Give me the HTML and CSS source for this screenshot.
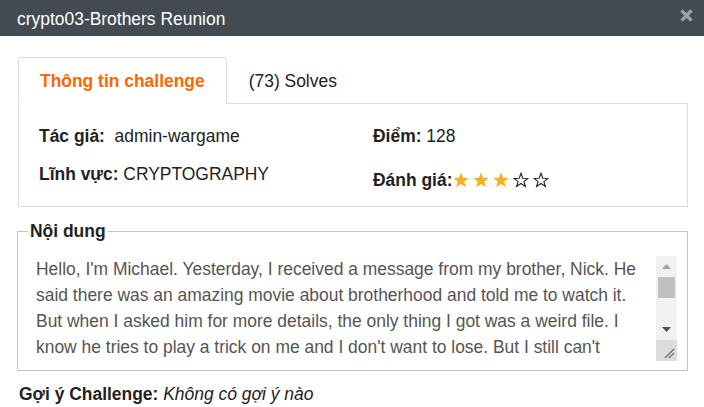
FILE: index.html
```html
<!DOCTYPE html>
<html lang="vi">
<head>
<meta charset="utf-8">
<title>crypto03-Brothers Reunion</title>
<link rel="stylesheet" href="styles.css">
</head>
<body>
<div class="modal">
  <div class="modal-header">
    <h4 class="title">crypto03-Brothers Reunion</h4>
    <span class="close">
      <svg width="13" height="13" viewBox="0 0 13 13"><path d="M1.5 1.5 L11.5 11.5 M11.5 1.5 L1.5 11.5" stroke="#9da1a6" stroke-width="3.2" stroke-linecap="butt"/></svg>
    </span>
  </div>
  <div class="modal-body">
    <ul class="tabs">
      <li class="tab active">Thông tin challenge</li>
      <li class="tab">(73) Solves</li>
    </ul>
    <div class="panel">
      <div class="col">
        <p class="row"><b>Tác giả:</b>&nbsp; admin-wargame</p>
        <p class="row"><b>Lĩnh vực:</b> CRYPTOGRAPHY</p>
      </div>
      <div class="col">
        <p class="row"><b>Điểm:</b> 128</p>
        <p class="row rating"><b>Đánh giá:</b><span class="stars">
          <svg class="star full" viewBox="0 0 16 16"><polygon points="8,0.4 10.1,5.8 15.8,6 11.3,9.6 12.9,15.3 8,12 3.1,15.3 4.7,9.6 0.2,6 5.9,5.8"/></svg>
          <svg class="star full" viewBox="0 0 16 16"><polygon points="8,0.4 10.1,5.8 15.8,6 11.3,9.6 12.9,15.3 8,12 3.1,15.3 4.7,9.6 0.2,6 5.9,5.8"/></svg>
          <svg class="star full" viewBox="0 0 16 16"><polygon points="8,0.4 10.1,5.8 15.8,6 11.3,9.6 12.9,15.3 8,12 3.1,15.3 4.7,9.6 0.2,6 5.9,5.8"/></svg>
          <svg class="star empty" viewBox="0 0 16 16"><polygon points="8,1.2 9.8,6.2 15,6.4 10.9,9.6 12.4,14.5 8,11.5 3.6,14.5 5.1,9.6 1,6.4 6.2,6.2"/></svg>
          <svg class="star empty" viewBox="0 0 16 16"><polygon points="8,1.2 9.8,6.2 15,6.4 10.9,9.6 12.4,14.5 8,11.5 3.6,14.5 5.1,9.6 1,6.4 6.2,6.2"/></svg>
        </span></p>
      </div>
    </div>
    <fieldset class="content">
      <legend>Nội dung</legend>
      <div class="desc">
        <div class="desc-text">Hello, I'm Michael. Yesterday, I received a message from my brother, Nick. He<br>said there was an amazing movie about brotherhood and told me to watch it.<br>But when I asked him for more details, the only thing I got was a weird file. I<br>know he tries to play a trick on me and I don't want to lose. But I still can't</div>
        <div class="scrollbar">
          <div class="sb-btn"><svg width="9" height="5" viewBox="0 0 9 5"><polygon points="0,5 4.5,0 9,5" fill="#a3a3a3"/></svg></div>
          <div class="sb-thumb"></div>
          <div class="sb-track"></div>
          <div class="sb-btn"><svg width="9" height="5" viewBox="0 0 9 5"><polygon points="0,0 4.5,5 9,0" fill="#505050"/></svg></div>
          <div class="sb-corner"><svg width="21" height="21" viewBox="0 0 21 21"><path d="M9 18 L18 9 M13 18 L18 13" stroke="#6e6e6e" stroke-width="1.3"/></svg></div>
        </div>
      </div>
    </fieldset>
    <p class="hint"><b>Gợi ý Challenge:</b> <i>Không có gợi ý nào</i></p>
  </div>
</div>
</body>
</html>
```

FILE: styles.css
```css
* { box-sizing: border-box; }

body {
  margin: 0;
  font-family: "Liberation Sans", Arial, sans-serif;
  font-size: 17.45px;
  color: #222;
  background: #fff;
}

.modal-header {
  height: 36px;
  background: #434a52;
  display: flex;
  align-items: center;
  justify-content: space-between;
  padding: 0 11px 0 17px;
}

.title {
  margin: 1px 0 0;
  color: #fff;
  font-size: 17.45px;
  font-weight: normal;
  line-height: 20px;
}

.close {
  display: flex;
  width: 13px;
  height: 13px;
  margin-top: -6px;
}

.modal-body {
  padding: 21px 16px 0 18px;
}

.tabs {
  display: flex;
  list-style: none;
  margin: 0;
  padding: 0;
  border-bottom: 1px solid #ddd;
}

.tab {
  height: 47px;
  line-height: 46px;
  padding: 0 21px;
  border: 1px solid transparent;
  border-radius: 4px 4px 0 0;
  margin-bottom: -1px;
  color: #222;
}

.tab.active {
  border-color: #ddd;
  border-bottom-color: #fff;
  background: #fff;
  color: #ff6600;
  font-weight: bold;
}

.panel {
  display: grid;
  grid-template-columns: 1fr 1fr;
  border: 1px solid #ddd;
  border-top: 0;
  padding: 21px 0 15px;
}

.col {
  padding: 0 20px;
}

.row {
  margin: 0;
  line-height: 22px;
}

.row + .row {
  margin-top: 16px;
}

.row.rating {
  margin-top: 22px;
  display: flex;
  align-items: center;
}

.stars {
  display: flex;
  gap: 4px;
  margin-left: 1px;
}

.star {
  width: 16px;
  height: 16px;
}

.star.full polygon { fill: #f0b323; }
.star.empty polygon { fill: none; stroke: #222; stroke-width: 1.1; }

.content {
  margin: 13px 0 0 -1px;
  border: 1px solid #c3c3c3;
  padding: 0 10px 9px;
}

.content legend {
  padding: 0 2px;
  font-weight: bold;
  line-height: 22px;
}

.desc {
  display: flex;
  height: 105px;
  margin-top: 14px;
}

.desc-text {
  flex: 1;
  padding-left: 8px;
  line-height: 26px;
  color: #555;
  overflow: hidden;
  white-space: nowrap;
}

.scrollbar {
  width: 21px;
  display: flex;
  flex-direction: column;
  background: #f1f1f1;
}

.sb-btn {
  height: 21px;
  display: flex;
  align-items: center;
  justify-content: center;
}

.sb-thumb {
  height: 21px;
  margin: 0 2px;
  background: #c1c1c1;
}

.sb-track {
  flex: 1;
}

.sb-corner {
  height: 21px;
  background: #dcdcdc;
  display: flex;
}

.hint {
  margin: 12px 0 0 1px;
  line-height: 22px;
}
```
